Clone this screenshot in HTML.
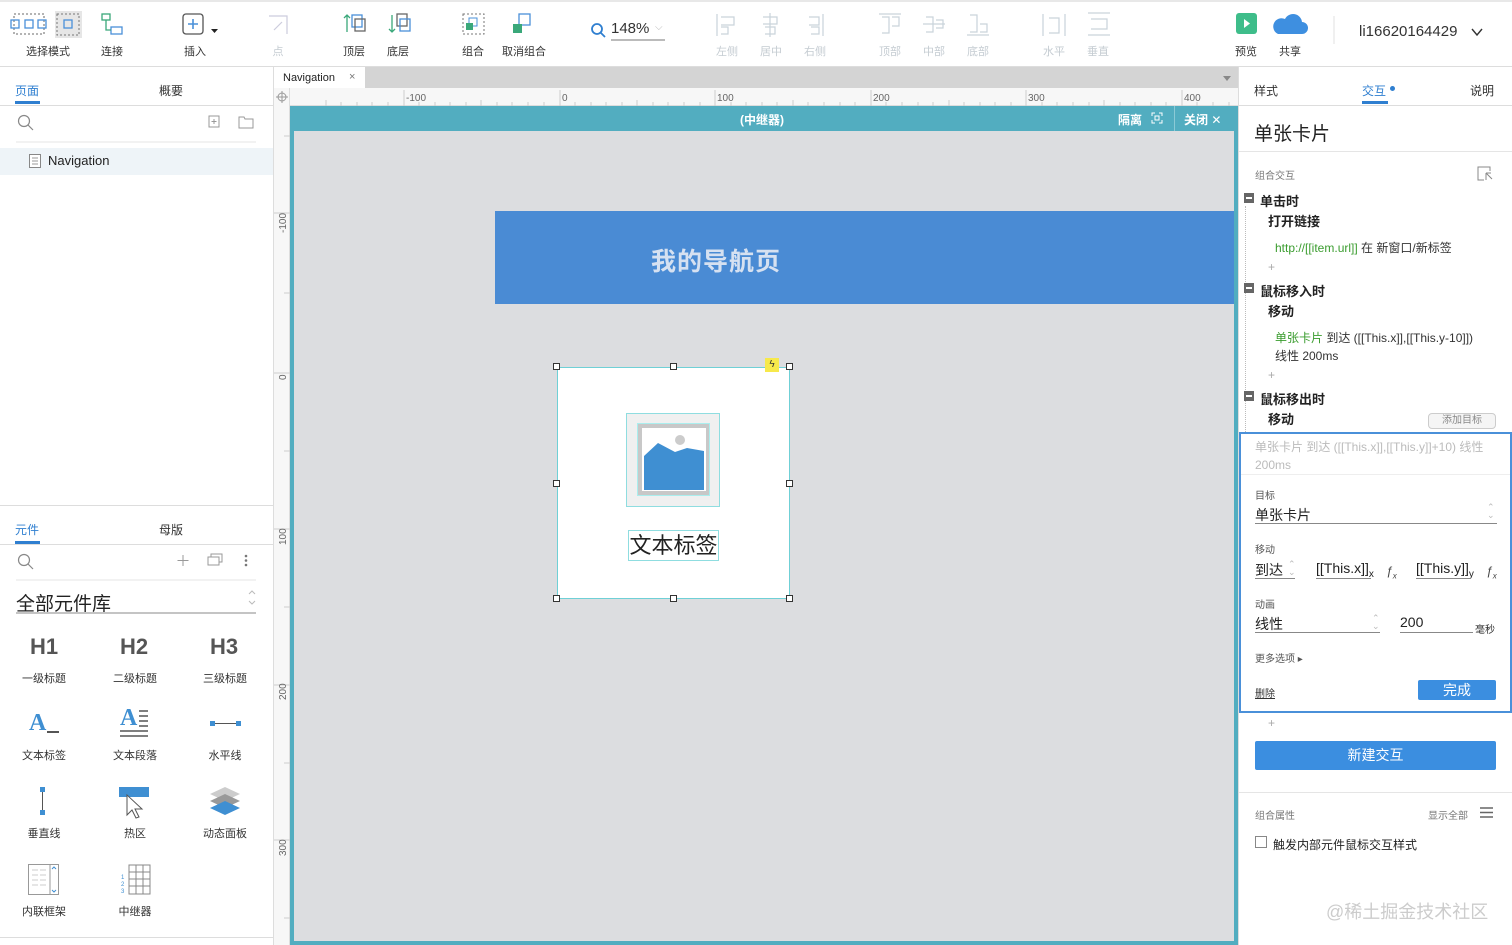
<!DOCTYPE html>
<html><head><meta charset="utf-8"><style>
*{margin:0;padding:0;box-sizing:border-box}
body{width:1512px;height:945px;position:relative;overflow:hidden;background:#fff;font-family:"Liberation Sans","Noto Sans CJK SC",sans-serif;color:#333}
.a{position:absolute}
.lbl{position:absolute;font-size:11px;color:#333;transform:translateX(-50%);white-space:nowrap;top:43px}
.dis{color:#c5ccd2}
.t12{font-size:12px}
.wl{position:absolute;font-size:11px;transform:translateX(-50%);white-space:nowrap;color:#333}
.h{position:absolute;width:7px;height:7px;border:1px solid #333;background:#fff}
.sec{font-size:13px;font-weight:bold;color:#222}
.minus{position:absolute;width:10px;height:10px;background:#666}
.minus:after{content:"";position:absolute;left:2px;top:4px;width:6px;height:2px;background:#fff}
</style></head><body>
<!-- toolbar -->
<div class="a" style="left:0;top:0;width:1512px;height:2px;background:#e8e8e8"></div>
<div class="a" style="left:0;top:66px;width:1512px;height:1px;background:#ddd"></div>
<svg class="a" style="left:0;top:0" width="1512" height="66">
 <g fill="none" stroke="#4a90d9" stroke-width="1.3">
  <rect x="14" y="14" width="30" height="20" stroke="#888" stroke-dasharray="2 2"/>
  <rect x="11" y="20" width="8" height="8"/><rect x="25" y="20" width="8" height="8"/><rect x="38" y="20" width="8" height="8"/>
 </g>
 <rect x="55" y="11" width="27" height="27" fill="#e6e6e6"/>
 <rect x="57" y="14" width="22" height="21" fill="none" stroke="#777" stroke-dasharray="2 2"/>
 <rect x="64" y="20" width="8" height="8" fill="none" stroke="#4a90d9" stroke-width="1.3"/>
 <g fill="none" stroke-width="1.3"><rect x="102" y="14" width="8" height="6" stroke="#3aa87a"/><rect x="111" y="27" width="11" height="7" stroke="#4a90d9"/><path d="M106 20v10h5" stroke="#3aa87a"/></g>
 <rect x="183" y="14" width="20" height="20" rx="3" fill="none" stroke="#555" stroke-width="1.3"/><path d="M193 19v10M188 24h10" stroke="#4a90d9" stroke-width="1.6"/>
 <path d="M211 29h7l-3.5 4z" fill="#222"/>
 <path d="M269 16h18v18M274 30l8-8" fill="none" stroke="#ccd" stroke-width="1.2"/>
 <g fill="none" stroke-width="1.3"><path d="M347 32V15M344 18l3-3 3 3" stroke="#3aa87a"/><rect x="352" y="15" width="10" height="12" stroke="#4a90d9"/><rect x="355" y="19" width="10" height="12" stroke="#666"/>
 <path d="M392 15v17M389 29l3 3 3-3" stroke="#3aa87a"/><rect x="397" y="14" width="10" height="12" stroke="#666"/><rect x="400" y="19" width="10" height="12" stroke="#4a90d9"/></g>
 <rect x="463" y="14" width="21" height="20" fill="none" stroke="#777" stroke-dasharray="2 2"/><rect x="469" y="18" width="8" height="8" fill="none" stroke="#4a90d9"/><rect x="466" y="23" width="7" height="7" fill="#3aa87a"/>
 <rect x="519" y="14" width="11" height="11" fill="none" stroke="#4a90d9" stroke-width="1.3"/><path d="M513 24h9v9h-9z" fill="#3aa87a"/>
 <circle cx="597" cy="29" r="5" fill="none" stroke="#2f7fd0" stroke-width="1.8"/><path d="M601 33l4 4" stroke="#2f7fd0" stroke-width="1.8"/>
 <path d="M611 40h54" stroke="#777"/>
 <g fill="none" stroke="#c9d3da" stroke-width="1.2">
  <path d="M717 14v22M721 17h13v8h-13M721 27h7v7h-7"/><path d="M770 13v24M763 17h14v7h-14M765 27h10v7h-10"/><path d="M823 14v22M809 17h10v8h-10M811 27h8v7h-8"/>
  <path d="M879 14h22M882 17h7v16h-7M892 17h7v9h-7"/><path d="M923 24h22M926 17h7v15h-7M936 20h7v8h-7"/><path d="M967 35h22M970 15h7v17h-7M980 24h7v8h-7"/>
  <path d="M1043 14v22M1065 14v22M1049 18h10v15h-10"/><path d="M1088 13h22M1088 35h22M1091 19h16v10h-16"/>
 </g>
 <rect x="1236" y="13" width="21" height="21" rx="3" fill="#3ebd8a"/><path d="M1244 19l6 4.5-6 4.5z" fill="#fff"/>
 <path d="M1278 34h24a6 6 0 0 0 0-12 9 9 0 0 0-17-3 7 7 0 0 0-7 15z" fill="#3e8fe0"/>
 <path d="M1334 16v28" stroke="#e2e2e2"/>
 <path d="M1472 29l5 6 5-6" fill="none" stroke="#333" stroke-width="1.4"/>
</svg>
<div class="lbl" style="left:48px">选择模式</div><div class="lbl" style="left:112px">连接</div><div class="lbl" style="left:195px">插入</div><div class="lbl dis" style="left:278px">点</div>
<div class="lbl" style="left:354px">顶层</div><div class="lbl" style="left:398px">底层</div><div class="lbl" style="left:473px">组合</div><div class="lbl" style="left:524px">取消组合</div>
<div class="a" style="left:611px;top:20px;font-size:15px;color:#333">148%</div><div class="a" style="left:655px;top:22px;font-size:10px;color:#bbb">⌵</div>
<div class="lbl dis" style="left:727px">左侧</div><div class="lbl dis" style="left:771px">居中</div><div class="lbl dis" style="left:815px">右侧</div><div class="lbl dis" style="left:890px">顶部</div><div class="lbl dis" style="left:934px">中部</div><div class="lbl dis" style="left:978px">底部</div><div class="lbl dis" style="left:1054px">水平</div><div class="lbl dis" style="left:1098px">垂直</div>
<div class="lbl" style="left:1246px">预览</div><div class="lbl" style="left:1290px">共享</div>
<div class="a" style="left:1359px;top:23px;font-size:15px;color:#333">li16620164429</div>

<!-- left panel -->
<div class="a" style="left:273px;top:67px;width:1px;height:878px;background:#ddd"></div>
<div class="a t12" style="left:15px;top:82px;color:#2f7fd0">页面</div><div class="a t12" style="left:159px;top:82px">概要</div>
<div class="a" style="left:15px;top:101px;width:25px;height:3px;background:#2f7fd0"></div>
<div class="a" style="left:0;top:105px;width:273px;height:1px;background:#ddd"></div>
<svg class="a" style="left:0;top:106px" width="273" height="70"><circle cx="24" cy="15" r="5.5" fill="none" stroke="#888" stroke-width="1.2"/><path d="M28 19l5 5" stroke="#888" stroke-width="1.2"/>
<rect x="209" y="10" width="10" height="11" fill="none" stroke="#999"/><path d="M214 13v5M211.5 15.5h5" stroke="#999"/><path d="M239 11h5l1 2h8v9h-14z" fill="none" stroke="#999"/>
<path d="M16 36h240" stroke="#e5e5e5"/></svg>
<div class="a" style="left:0;top:148px;width:273px;height:27px;background:#eef4f8"></div>
<svg class="a" style="left:29px;top:154px" width="12" height="14"><rect x=".5" y=".5" width="11" height="13" fill="#fff" stroke="#888"/><path d="M3 4h6M3 7h6M3 10h6" stroke="#999"/></svg>
<div class="a" style="left:48px;top:153px;font-size:13px;color:#222;font-weight:500">Navigation</div>

<div class="a" style="left:0;top:505px;width:273px;height:1px;background:#ddd"></div>
<div class="a t12" style="left:15px;top:521px;color:#2f7fd0">元件</div><div class="a t12" style="left:159px;top:521px">母版</div>
<div class="a" style="left:15px;top:541px;width:25px;height:3px;background:#2f7fd0"></div>
<div class="a" style="left:0;top:544px;width:273px;height:1px;background:#ddd"></div>
<svg class="a" style="left:0;top:545px" width="273" height="70"><circle cx="24" cy="15" r="5.5" fill="none" stroke="#888" stroke-width="1.2"/><path d="M28 19l5 5" stroke="#888" stroke-width="1.2"/>
<path d="M183 10v11M177.5 15.5h11" stroke="#999"/><path d="M208 12h11v8h-11zM211 12v-3h11v8h-3" fill="none" stroke="#999"/><circle cx="246" cy="11" r="1.3" fill="#777"/><circle cx="246" cy="15.5" r="1.3" fill="#777"/><circle cx="246" cy="20" r="1.3" fill="#777"/>
<path d="M16 35h240" stroke="#e5e5e5"/><path d="M16 68h240" stroke="#888"/><path d="M249 49l3-3 3 3M249 56l3 3 3-3" fill="none" stroke="#bbb"/></svg>
<div class="a" style="left:16px;top:589px;font-size:19px;color:#222">全部元件库</div>
<div class="a" style="left:30px;top:634px;font-size:22px;font-weight:bold;color:#555">H1</div>
<div class="a" style="left:120px;top:634px;font-size:22px;font-weight:bold;color:#555">H2</div>
<div class="a" style="left:210px;top:634px;font-size:22px;font-weight:bold;color:#555">H3</div>
<div class="wl" style="left:44px;top:670px">一级标题</div><div class="wl" style="left:135px;top:670px">二级标题</div><div class="wl" style="left:225px;top:670px">三级标题</div>
<div class="a" style="left:29px;top:710px;font:bold 24px 'Liberation Serif',serif;color:#3f8fd2">A</div><div class="a" style="left:47px;top:731px;width:12px;height:2px;background:#555"></div>
<div class="a" style="left:120px;top:705px;font:bold 24px 'Liberation Serif',serif;color:#3f8fd2">A</div>
<svg class="a" style="left:118px;top:708px" width="34" height="32"><path d="M21 3h9M21 8h9M21 13h9M21 18h9M2 23h28M2 28h28" stroke="#555" stroke-width="1.6"/></svg>
<svg class="a" style="left:205px;top:716px" width="40" height="14"><rect x="5" y="5" width="5" height="5" fill="#3f8fd2"/><rect x="31" y="5" width="5" height="5" fill="#3f8fd2"/><path d="M10 7.5h21" stroke="#555"/></svg>
<div class="wl" style="left:44px;top:747px">文本标签</div><div class="wl" style="left:135px;top:747px">文本段落</div><div class="wl" style="left:225px;top:747px">水平线</div>
<svg class="a" style="left:38px;top:786px" width="12" height="32"><rect x="2" y="1" width="5" height="5" fill="#3f8fd2"/><rect x="2" y="24" width="5" height="5" fill="#3f8fd2"/><path d="M4.5 6v18" stroke="#555"/></svg>
<svg class="a" style="left:118px;top:786px" width="34" height="34"><rect x="1" y="1" width="30" height="10" fill="#3f8fd2"/><path d="M9 9v20l5-5 4 8 3-1-4-8h7z" fill="#fff" stroke="#555"/></svg>
<svg class="a" style="left:208px;top:786px" width="34" height="32"><path d="M2 8l15-7 15 7-15 7z" fill="#ccc"/><path d="M2 15l15-7 15 7-15 7z" fill="#999"/><path d="M2 22l15-7 15 7-15 7z" fill="#3f8fd2"/></svg>
<div class="wl" style="left:44px;top:825px">垂直线</div><div class="wl" style="left:135px;top:825px">热区</div><div class="wl" style="left:225px;top:825px">动态面板</div>
<svg class="a" style="left:28px;top:864px" width="32" height="32"><rect x=".5" y=".5" width="30" height="30" fill="#fff" stroke="#999"/><path d="M22 1v30" stroke="#999"/><path d="M4 6h6M12 6h6M4 11h6M12 11h6M4 16h6M12 16h6M4 21h6M12 21h6" stroke="#ccc"/><path d="M24 5l2-2 2 2M24 26l2 2 2-2" stroke="#3f8fd2" fill="none"/></svg>
<svg class="a" style="left:120px;top:864px" width="32" height="32"><path d="M9 1h21v29H9zM9 8h21M9 15h21M9 22h21M16 1v29M23 1v29" fill="none" stroke="#888"/><text x="1" y="15" font-size="6" fill="#3f8fd2">1</text><text x="1" y="22" font-size="6" fill="#3f8fd2">2</text><text x="1" y="29" font-size="6" fill="#3f8fd2">3</text></svg>
<div class="wl" style="left:44px;top:903px">内联框架</div><div class="wl" style="left:135px;top:903px">中继器</div>
<div class="a" style="left:0;top:937px;width:273px;height:1px;background:#ddd"></div>

<!-- canvas -->
<div class="a" style="left:274px;top:67px;width:964px;height:21px;background:#d4d4d4"></div>
<div class="a" style="left:274px;top:67px;width:91px;height:21px;background:#fff;font-size:11px;padding:5px 0 0 9px;color:#222">Navigation<span style="position:absolute;left:75px;top:4px;color:#777">×</span></div>
<div class="a" style="left:1223px;top:76px;border:4px solid transparent;border-top:5px solid #888"></div>
<div class="a" style="left:274px;top:88px;width:964px;height:18px;background:#f7f7f7;border-bottom:1px solid #ddd"></div>
<div class="a" style="left:274px;top:88px;width:16px;height:857px;background:#f7f7f7;border-right:1px solid #ddd"></div>
<svg class="a" style="left:274px;top:88px" width="964" height="857">
 <circle cx="8" cy="9" r="4" fill="none" stroke="#999"/><path d="M8 3v12M2 9h12" stroke="#999"/>
 <g stroke="#ccc"><path d="M130 2v16M286 2v16M441 2v16M597 2v16M752 2v16M908 2v16"/>
 <path d="M52 12v6M67 14v4M83 14v4M98 14v4M114 14v4M145 14v4M161 14v4M176 14v4M192 14v4M207 12v6M223 14v4M238 14v4M254 14v4M270 14v4M301 14v4M317 14v4M332 14v4M348 14v4M363 12v6M379 14v4M394 14v4M410 14v4M426 14v4M457 14v4M472 14v4M488 14v4M503 14v4M519 12v6M534 14v4M550 14v4M566 14v4M581 14v4M612 14v4M628 14v4M644 14v4M659 14v4M675 12v6M690 14v4M706 14v4M721 14v4M737 14v4M768 14v4M783 14v4M799 14v4M815 14v4M830 12v6M846 14v4M861 14v4M877 14v4M892 14v4M923 14v4M939 14v4M955 14v4"/>
 <path d="M0 125h16M0 285h16M0 441h16M0 597h16M0 752h16M10 48h6M10 205h6M10 363h6M10 519h6M10 675h6M10 830h6"/></g>
 <g font-size="10" fill="#666"><text x="132" y="13">-100</text><text x="288" y="13">0</text><text x="443" y="13">100</text><text x="599" y="13">200</text><text x="754" y="13">300</text><text x="910" y="13">400</text></g>
 <g font-size="10" fill="#666"><text transform="translate(12,145) rotate(-90)">-100</text><text transform="translate(12,292) rotate(-90)">0</text><text transform="translate(12,457) rotate(-90)">100</text><text transform="translate(12,612) rotate(-90)">200</text><text transform="translate(12,768) rotate(-90)">300</text></g>
</svg>
<div class="a" style="left:290px;top:106px;width:948px;height:839px;background:#52adc0"></div>
<div class="a" style="left:294px;top:131px;width:940px;height:810px;background:#dcdde0"></div>
<div class="a" style="left:740px;top:111px;font-size:12px;color:#fff;font-weight:bold">(中继器)</div>
<div class="a" style="left:1118px;top:111px;font-size:12px;color:#fff;font-weight:bold">隔离</div>
<svg class="a" style="left:1151px;top:112px" width="12" height="12"><path d="M1 4V1h3M8 1h3v3M11 8v3H8M4 11H1V8" fill="none" stroke="#fff"/><rect x="4" y="4" width="4" height="4" fill="none" stroke="#fff"/></svg>
<div class="a" style="left:1174px;top:106px;width:1px;height:25px;background:#8ccad6"></div>
<div class="a" style="left:1184px;top:111px;font-size:12px;color:#fff;font-weight:bold">关闭 <span style="font-weight:normal">✕</span></div>
<div class="a" style="left:495px;top:211px;width:739px;height:93px;background:#4a8bd4"></div>
<div class="a" style="left:651px;top:242px;font-size:25px;font-weight:bold;color:#d6e1f1;letter-spacing:1px">我的导航页</div>
<div class="a" style="left:557px;top:367px;width:233px;height:232px;background:#fff;border:1px solid #6fd0d6"></div>
<div class="a" style="left:626px;top:413px;width:94px;height:94px;background:#f0f0f0;border:1px solid #8fdde0"></div>
<div class="a" style="left:637px;top:423px;width:73px;height:73px;background:#c8c8c8;border:1px solid #aee"></div>
<svg class="a" style="left:642px;top:428px" width="64" height="63"><rect width="64" height="63" fill="#fff"/><circle cx="38" cy="12" r="5" fill="#ccc"/><path d="M2 28l14-13 17 9 12-4 17 3v39H2z" fill="#3f8fd2"/></svg>
<div class="a" style="left:628px;top:530px;width:91px;height:31px;border:1px solid #8fdde0;font-size:22px;color:#222;text-align:center;line-height:29px">文本标签</div>
<div class="h" style="left:553px;top:363px"></div><div class="h" style="left:670px;top:363px"></div><div class="h" style="left:786px;top:363px"></div>
<div class="h" style="left:553px;top:480px"></div><div class="h" style="left:786px;top:480px"></div>
<div class="h" style="left:553px;top:595px"></div><div class="h" style="left:670px;top:595px"></div><div class="h" style="left:786px;top:595px"></div>
<div class="a" style="left:765px;top:358px;width:14px;height:14px;background:#f7e94b;font-size:10px;text-align:center;line-height:14px">ϟ</div>

<!-- right panel -->
<div class="a" style="left:1238px;top:67px;width:1px;height:878px;background:#ddd"></div>
<div class="a t12" style="left:1254px;top:82px">样式</div><div class="a t12" style="left:1362px;top:82px;color:#2f7fd0">交互</div><div class="a" style="left:1390px;top:86px;width:5px;height:5px;border-radius:50%;background:#2f7fd0"></div><div class="a t12" style="left:1470px;top:82px">说明</div>
<div class="a" style="left:1362px;top:101px;width:26px;height:3px;background:#2f7fd0"></div>
<div class="a" style="left:1239px;top:105px;width:273px;height:1px;background:#ddd"></div>
<div class="a" style="left:1254px;top:119px;font-size:19px;color:#222">单张卡片</div>
<div class="a" style="left:1239px;top:151px;width:273px;height:1px;background:#e5e5e5"></div>
<div class="a" style="left:1255px;top:167px;font-size:10px;color:#777">组合交互</div>
<svg class="a" style="left:1477px;top:166px" width="16" height="15"><path d="M13 5V1H1v13h6" fill="none" stroke="#888"/><path d="M9 7v7M9 7h5M9 7l6 6" stroke="#888" fill="none"/></svg>
<div class="a" style="left:1245px;top:206px;height:230px;border-left:1px dotted #bbb"></div>
<div class="minus" style="left:1244px;top:193px"></div><div class="a sec" style="left:1260px;top:191px">单击时</div>
<div class="a sec" style="left:1268px;top:211px">打开链接</div>
<div class="a" style="left:1275px;top:239px;font-size:12px"><span style="color:#3a9c2e">http://[[item.url]]</span> 在 新窗口/新标签</div>
<div class="a" style="left:1268px;top:260px;font-size:12px;color:#aaa">+</div>
<div class="minus" style="left:1244px;top:283px"></div><div class="a sec" style="left:1260px;top:281px">鼠标移入时</div>
<div class="a sec" style="left:1268px;top:301px">移动</div>
<div class="a" style="left:1275px;top:329px;font-size:12px;line-height:18px"><span style="color:#3a9c2e">单张卡片</span> 到达 ([[This.x]],[[This.y-10]])<br>线性 200ms</div>
<div class="a" style="left:1268px;top:368px;font-size:12px;color:#aaa">+</div>
<div class="minus" style="left:1244px;top:391px"></div><div class="a sec" style="left:1260px;top:389px">鼠标移出时</div>
<div class="a sec" style="left:1268px;top:409px">移动</div>
<div class="a" style="left:1428px;top:413px;width:68px;height:16px;border:1px solid #ccc;border-radius:4px;background:#f5f5f5;font-size:10px;color:#888;text-align:center;line-height:14px">添加目标</div>
<div class="a" style="left:1239px;top:432px;width:273px;height:281px;border:2px solid #4a90d9;background:#fff"></div>
<div class="a" style="left:1255px;top:438px;font-size:12px;color:#bbb;line-height:18px;width:235px">单张卡片 到达 ([[This.x]],[[This.y]]+10) 线性 200ms</div>
<div class="a" style="left:1241px;top:474px;width:269px;height:1px;background:#eee"></div>
<div class="a" style="left:1255px;top:487px;font-size:10px;color:#555">目标</div>
<div class="a" style="left:1255px;top:505px;font-size:14px;color:#222">单张卡片</div>
<div class="a" style="left:1255px;top:523px;width:242px;height:1px;background:#888"></div>
<div class="a" style="left:1487px;top:503px;font-size:9px;color:#bbb;line-height:8px">⌃<br>⌄</div>
<div class="a" style="left:1255px;top:541px;font-size:10px;color:#555">移动</div>
<div class="a" style="left:1255px;top:560px;font-size:14px;color:#222">到达</div><div class="a" style="left:1288px;top:560px;font-size:9px;color:#bbb;line-height:8px">⌃<br>⌄</div>
<div class="a" style="left:1255px;top:578px;width:40px;height:1px;background:#888"></div>
<div class="a" style="left:1316px;top:560px;font-size:14px;color:#222">[[This.x]]<sub style="font-size:10px">x</sub></div><div class="a" style="left:1316px;top:578px;width:55px;height:1px;background:#888"></div>
<div class="a" style="left:1386px;top:564px;font-size:12px;font-style:italic;color:#444">ƒ<sub style="font-size:8px">x</sub></div>
<div class="a" style="left:1416px;top:560px;font-size:14px;color:#222">[[This.y]]<sub style="font-size:10px">y</sub></div><div class="a" style="left:1416px;top:578px;width:55px;height:1px;background:#888"></div>
<div class="a" style="left:1486px;top:564px;font-size:12px;font-style:italic;color:#444">ƒ<sub style="font-size:8px">x</sub></div>
<div class="a" style="left:1255px;top:596px;font-size:10px;color:#555">动画</div>
<div class="a" style="left:1255px;top:614px;font-size:14px;color:#222">线性</div><div class="a" style="left:1372px;top:614px;font-size:9px;color:#bbb;line-height:8px">⌃<br>⌄</div>
<div class="a" style="left:1255px;top:632px;width:125px;height:1px;background:#888"></div>
<div class="a" style="left:1400px;top:614px;font-size:14px;color:#222">200</div><div class="a" style="left:1400px;top:632px;width:73px;height:1px;background:#888"></div>
<div class="a" style="left:1475px;top:621px;font-size:10px;color:#333">毫秒</div>
<div class="a" style="left:1255px;top:650px;font-size:10px;color:#555">更多选项 ▸</div>
<div class="a" style="left:1255px;top:685px;font-size:10px;color:#333;text-decoration:underline">删除</div>
<div class="a" style="left:1418px;top:680px;width:78px;height:20px;background:#3b8ee0;color:#fff;font-size:14px;text-align:center;line-height:20px;border-radius:2px">完成</div>
<div class="a" style="left:1268px;top:716px;font-size:12px;color:#aaa">+</div>
<div class="a" style="left:1255px;top:741px;width:241px;height:29px;background:#3b8ee0;color:#fff;font-size:14px;text-align:center;line-height:29px;border-radius:2px">新建交互</div>
<div class="a" style="left:1239px;top:792px;width:273px;height:1px;background:#e5e5e5"></div>
<div class="a" style="left:1255px;top:807px;font-size:10px;color:#777">组合属性</div>
<div class="a" style="left:1428px;top:807px;font-size:10px;color:#777">显示全部</div>
<svg class="a" style="left:1480px;top:807px" width="13" height="11"><path d="M0 1h13M0 5.5h13M0 10h13" stroke="#666" stroke-width="1.5"/></svg>
<div class="a" style="left:1255px;top:836px;width:12px;height:12px;border:1px solid #888"></div>
<div class="a" style="left:1273px;top:836px;font-size:12px;color:#222">触发内部元件鼠标交互样式</div>
<div class="a" style="left:1326px;top:898px;font-size:18px;color:#ccc">@稀土掘金技术社区</div>
</body></html>
